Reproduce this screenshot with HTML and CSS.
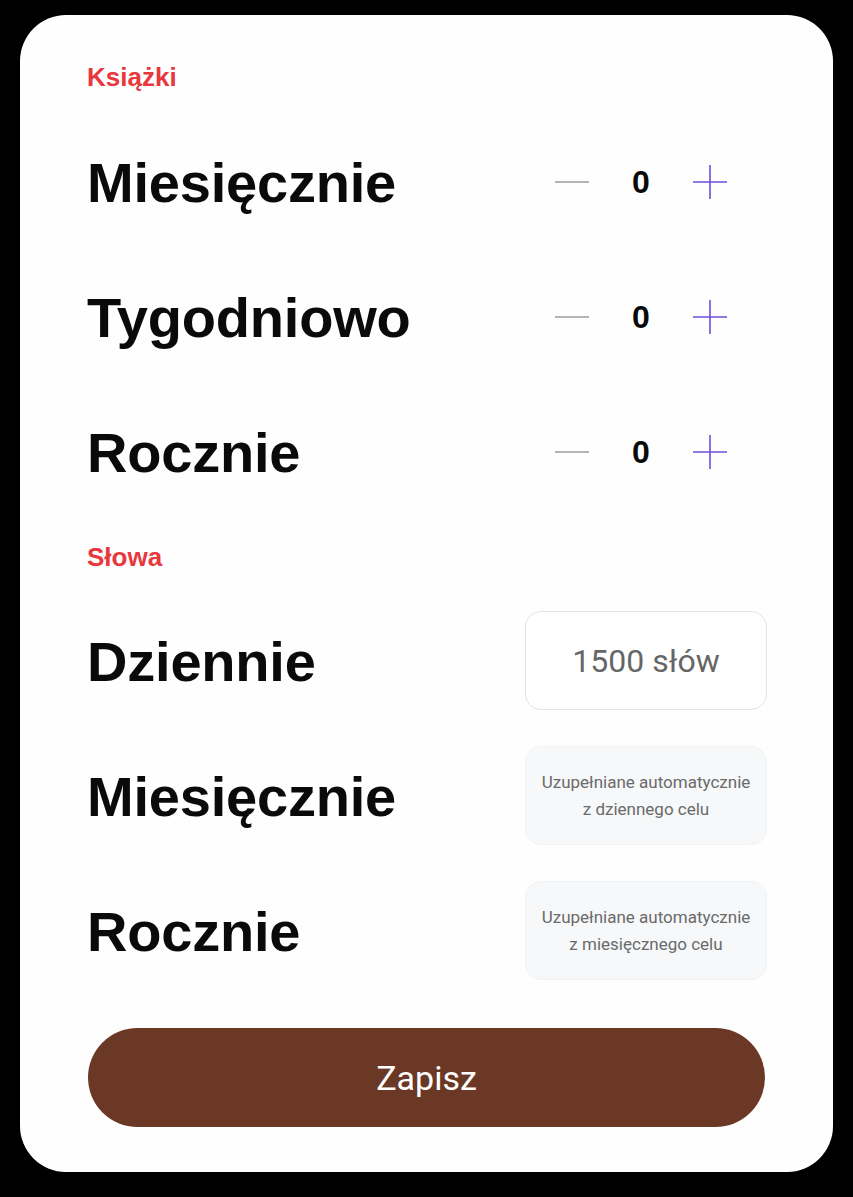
FILE: index.html
```html
<!DOCTYPE html>
<html lang="pl">
<head>
<meta charset="utf-8">
<title>Cele</title>
<link rel="stylesheet" href="styles.css">
</head>
<body>
<div class="card">
  <h2 class="section-title">Książki</h2>
  <div class="rows">
    <div class="row">
      <span class="label">Miesięcznie</span>
      <div class="stepper">
        <svg class="icon" viewBox="0 0 34 34"><line x1="0" y1="17" x2="34" y2="17" class="minus"/></svg>
        <span class="count">0</span>
        <svg class="icon" viewBox="0 0 34 34"><line x1="0" y1="17" x2="34" y2="17" class="plus"/><line x1="17" y1="0" x2="17" y2="34" class="plus"/></svg>
      </div>
    </div>
    <div class="row">
      <span class="label">Tygodniowo</span>
      <div class="stepper">
        <svg class="icon" viewBox="0 0 34 34"><line x1="0" y1="17" x2="34" y2="17" class="minus"/></svg>
        <span class="count">0</span>
        <svg class="icon" viewBox="0 0 34 34"><line x1="0" y1="17" x2="34" y2="17" class="plus"/><line x1="17" y1="0" x2="17" y2="34" class="plus"/></svg>
      </div>
    </div>
    <div class="row">
      <span class="label">Rocznie</span>
      <div class="stepper">
        <svg class="icon" viewBox="0 0 34 34"><line x1="0" y1="17" x2="34" y2="17" class="minus"/></svg>
        <span class="count">0</span>
        <svg class="icon" viewBox="0 0 34 34"><line x1="0" y1="17" x2="34" y2="17" class="plus"/><line x1="17" y1="0" x2="17" y2="34" class="plus"/></svg>
      </div>
    </div>
  </div>
  <h2 class="section-title second">Słowa</h2>
  <div class="rows">
    <div class="row">
      <span class="label">Dziennie</span>
      <div class="field">1500 słów</div>
    </div>
    <div class="row">
      <span class="label">Miesięcznie</span>
      <div class="field auto">Uzupełniane automatycznie<br>z dziennego celu</div>
    </div>
    <div class="row">
      <span class="label">Rocznie</span>
      <div class="field auto">Uzupełniane automatycznie<br>z miesięcznego celu</div>
    </div>
  </div>
  <button class="save" type="button">Zapisz</button>
</div>
</body>
</html>
```

FILE: styles.css
```css
html, body {
  margin: 0;
  padding: 0;
  background: #000;
}

body {
  width: 853px;
  height: 1197px;
  overflow: hidden;
  font-family: "Liberation Sans", Arial, sans-serif;
}

.card {
  box-sizing: border-box;
  width: 813px;
  height: 1157px;
  margin: 15px 0 0 20px;
  padding: 47px 66px 0 67px;
  background: #fefefe;
  border-radius: 46px;
  display: flex;
  flex-direction: column;
}

.section-title {
  margin: 0 0 40px;
  font-size: 26px;
  line-height: 30px;
  font-weight: 700;
  color: #e8383d;
}

.section-title.second {
  margin: 41px 0 39px;
}

.rows {
  display: flex;
  flex-direction: column;
  gap: 36px;
}

.row {
  height: 99px;
  display: flex;
  align-items: center;
  justify-content: space-between;
}

.label {
  font-size: 56px;
  line-height: 1;
  font-weight: 700;
  color: #0a0a0a;
  letter-spacing: -0.2px;
  padding-top: 3px;
}

.stepper {
  display: flex;
  align-items: center;
  gap: 25px;
  margin-right: 40px;
}

.icon {
  width: 34px;
  height: 34px;
  display: block;
}

.minus {
  stroke: #9c9c9c;
  stroke-width: 1.6;
}

.plus {
  stroke: #6c4fd9;
  stroke-width: 1.6;
}

.count {
  width: 54px;
  text-align: center;
  font-size: 32px;
  line-height: 1;
  font-weight: 700;
  color: #0a0a0a;
}

.field {
  box-sizing: border-box;
  width: 242px;
  height: 99px;
  border: 1px solid #e3e3e3;
  border-radius: 16px;
  background: #fff;
  display: flex;
  align-items: center;
  justify-content: center;
  text-align: center;
  font-family: Roboto, "Liberation Sans", sans-serif;
  font-size: 32px;
  color: #666;
}

.field.auto {
  background: #f7f8f9;
  border-color: #f1f2f3;
  font-size: 17px;
  line-height: 27px;
  color: #6a6a6a;
}

.save {
  margin: 48px 2px 0 1px;
  height: 99px;
  border: none;
  border-radius: 50px;
  background: #6b3826;
  color: #fff;
  font-family: Roboto, "Liberation Sans", sans-serif;
  font-size: 34px;
  cursor: pointer;
}
```
